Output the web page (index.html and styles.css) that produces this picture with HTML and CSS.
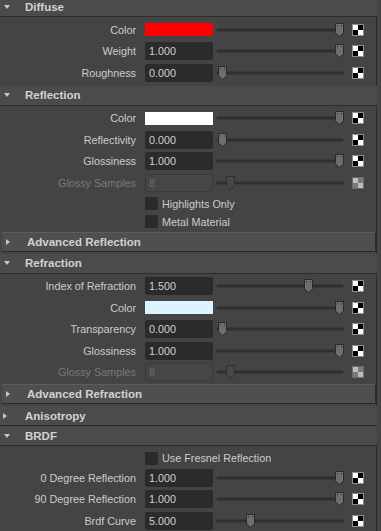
FILE: index.html
```html
<!DOCTYPE html>
<html lang="en">
<head>
    <meta charset="UTF-8">
    <title>Attribute Editor</title>
    <link rel="stylesheet" href="styles.css">
</head>
<body>

    <div class="editor">

        <!-- Diffuse -->
        <div class="frame">
            <div class="frame-head"><span class="arrow-down"></span>Diffuse</div>
            <div class="frame-body">
                <div class="row">
                    <span class="lbl">Color</span>
                    <span class="swatch red"></span>
                    <div class="track"><span class="thumb" style="left: 117px"></span></div>
                    <span class="map"></span>
                </div>
                <div class="row">
                    <span class="lbl">Weight</span>
                    <span class="field">1.000</span>
                    <div class="track"><span class="thumb" style="left: 117px"></span></div>
                    <span class="map"></span>
                </div>
                <div class="row">
                    <span class="lbl">Roughness</span>
                    <span class="field">0.000</span>
                    <div class="track"><span class="thumb" style="left: 0px"></span></div>
                    <span class="map"></span>
                </div>
            </div>
        </div>

        <!-- Reflection -->
        <div class="frame">
            <div class="frame-head"><span class="arrow-down"></span>Reflection</div>
            <div class="frame-body">
                <div class="row">
                    <span class="lbl">Color</span>
                    <span class="swatch white"></span>
                    <div class="track"><span class="thumb" style="left: 117px"></span></div>
                    <span class="map"></span>
                </div>
                <div class="row">
                    <span class="lbl">Reflectivity</span>
                    <span class="field">0.000</span>
                    <div class="track"><span class="thumb" style="left: 0px"></span></div>
                    <span class="map"></span>
                </div>
                <div class="row">
                    <span class="lbl">Glossiness</span>
                    <span class="field">1.000</span>
                    <div class="track"><span class="thumb" style="left: 117px"></span></div>
                    <span class="map"></span>
                </div>
                <div class="row disabled">
                    <span class="lbl">Glossy Samples</span>
                    <span class="field">8</span>
                    <div class="track"><span class="thumb" style="left: 8px"></span></div>
                    <span class="map"></span>
                </div>
                <div class="checks">
                    <div class="check-row"><span class="box"></span>Highlights Only</div>
                    <div class="check-row"><span class="box"></span>Metal Material</div>
                </div>
                <div class="subframe">
                    <div class="frame-head"><span class="arrow-right"></span>Advanced Reflection</div>
                </div>
            </div>
        </div>

        <!-- Refraction -->
        <div class="frame">
            <div class="frame-head"><span class="arrow-down"></span>Refraction</div>
            <div class="frame-body">
                <div class="row">
                    <span class="lbl">Index of Refraction</span>
                    <span class="field">1.500</span>
                    <div class="track"><span class="thumb" style="left: 86px"></span></div>
                    <span class="map"></span>
                </div>
                <div class="row">
                    <span class="lbl">Color</span>
                    <span class="swatch ice"></span>
                    <div class="track"><span class="thumb" style="left: 117px"></span></div>
                    <span class="map"></span>
                </div>
                <div class="row">
                    <span class="lbl">Transparency</span>
                    <span class="field">0.000</span>
                    <div class="track"><span class="thumb" style="left: 0px"></span></div>
                    <span class="map"></span>
                </div>
                <div class="row">
                    <span class="lbl">Glossiness</span>
                    <span class="field">1.000</span>
                    <div class="track"><span class="thumb" style="left: 117px"></span></div>
                    <span class="map"></span>
                </div>
                <div class="row disabled">
                    <span class="lbl">Glossy Samples</span>
                    <span class="field">8</span>
                    <div class="track"><span class="thumb" style="left: 8px"></span></div>
                    <span class="map"></span>
                </div>
                <div class="subframe">
                    <div class="frame-head"><span class="arrow-right"></span>Advanced Refraction</div>
                </div>
            </div>
        </div>

        <!-- Anisotropy -->
        <div class="frame">
            <div class="frame-head"><span class="arrow-right"></span>Anisotropy</div>
        </div>

        <!-- BRDF -->
        <div class="frame">
            <div class="frame-head"><span class="arrow-down"></span>BRDF</div>
            <div class="frame-body">
                <div class="checks">
                    <div class="check-row"><span class="box"></span>Use Fresnel Reflection</div>
                </div>
                <div class="row">
                    <span class="lbl">0 Degree Reflection</span>
                    <span class="field">1.000</span>
                    <div class="track"><span class="thumb" style="left: 117px"></span></div>
                    <span class="map"></span>
                </div>
                <div class="row">
                    <span class="lbl">90 Degree Reflection</span>
                    <span class="field">1.000</span>
                    <div class="track"><span class="thumb" style="left: 117px"></span></div>
                    <span class="map"></span>
                </div>
                <div class="row">
                    <span class="lbl">Brdf Curve</span>
                    <span class="field">5.000</span>
                    <div class="track"><span class="thumb" style="left: 28px"></span></div>
                    <span class="map"></span>
                </div>
            </div>
        </div>

    </div>

</body>
</html>
```

FILE: styles.css
```css
body {
    margin: 0;
    background-color: #444444;
    font-family: "Liberation Sans", Arial, sans-serif;
    font-size: 10.8px;
    color: #cccccc;
    overflow: hidden;
}
.editor {
    width: 377px;
    margin-top: -3px;
}
.frame-head {
    display: flex;
    align-items: center;
    height: 19px;
    background-color: #4b4b4b;
    border-bottom: 1px solid #2b2b2b;
    font-size: 11.5px;
    font-weight: bold;
    color: #d2d2d2;
}
.arrow-down {
    width: 0;
    height: 0;
    margin: 0 15px 0 4px;
    border-left: 3.5px solid transparent;
    border-right: 3.5px solid transparent;
    border-top: 4px solid #c8c8c8;
}
.arrow-right {
    width: 0;
    height: 0;
    margin: 0 18px 0 3px;
    border-top: 3.5px solid transparent;
    border-bottom: 3.5px solid transparent;
    border-left: 4px solid #c8c8c8;
}
.frame-body {
    padding: 2px 0;
    border-right: 1px solid #2b2b2b;
}
.row {
    display: flex;
    align-items: center;
    height: 21.5px;
}
.lbl {
    width: 136px;
    flex: none;
    text-align: right;
}
.field {
    flex: none;
    box-sizing: border-box;
    width: 68px;
    height: 18px;
    margin-left: 9px;
    padding-left: 4px;
    line-height: 18px;
    background-color: #2b2b2b;
    border-radius: 2px;
    color: #d2d2d2;
}
.swatch {
    flex: none;
    width: 68px;
    height: 13px;
    margin-left: 9px;
}
.red {
    background-color: #ff0000;
}
.white {
    background-color: #ffffff;
}
.ice {
    background-color: #def2ff;
}
.track {
    position: relative;
    flex: none;
    box-sizing: border-box;
    width: 128px;
    height: 4px;
    margin-left: 3px;
    background-color: #2f2f2f;
    border: 1px solid #3a3a3a;
    border-radius: 2px;
}
.thumb {
    position: absolute;
    top: -7px;
    width: 11px;
    height: 15px;
    background: url("data:image/svg+xml,%3Csvg xmlns='http://www.w3.org/2000/svg' width='11' height='15'%3E%3Cpath d='M1.5 1.5h8v9.5l-4 3.5l-4-3.5z' fill='%236e6e6e' stroke='%232a2a2a'/%3E%3Cpath d='M3.5 3v1.5M7.5 3v1.5' stroke='%233a3a3a'/%3E%3C/svg%3E") no-repeat;
}
.map {
    flex: none;
    box-sizing: border-box;
    width: 12px;
    height: 12px;
    margin-left: 8px;
    border: 1px solid #8c8c8c;
    background: conic-gradient(#000 0 25%, #fff 0 50%, #000 0 75%, #fff 0);
}
.disabled .lbl {
    color: #7a7a7a;
}
.disabled .field {
    background-color: #464646;
    border: 1px solid #3b3b3b;
    padding-left: 3px;
    line-height: 16px;
    color: #6e6e6e;
}
.disabled .thumb {
    background: url("data:image/svg+xml,%3Csvg xmlns='http://www.w3.org/2000/svg' width='11' height='15'%3E%3Cpath d='M1.5 1.5h8v9.5l-4 3.5l-4-3.5z' fill='%23474747' stroke='%232f2f2f'/%3E%3C/svg%3E") no-repeat;
}
.disabled .map {
    border-color: #6a6a6a;
    background: conic-gradient(#7a7a7a 0 25%, #bdbdbd 0 50%, #7a7a7a 0 75%, #bdbdbd 0);
}
.checks {
    margin-top: 1px;
}
.check-row {
    display: flex;
    align-items: center;
    height: 18px;
    margin-left: 145px;
}
.box {
    width: 13px;
    height: 13px;
    margin-right: 4px;
    background-color: #2b2b2b;
    border-radius: 1px;
}
.subframe {
    margin: 1px 0 0 2px;
}
.subframe .frame-head {
    height: 18px;
    background-color: #4f4f4f;
    border-top: 1px solid #5c5c5c;
    border-right: 1px solid #2b2b2b;
}
.subframe .arrow-right {
    margin: 0 17px 0 4px;
}
```
